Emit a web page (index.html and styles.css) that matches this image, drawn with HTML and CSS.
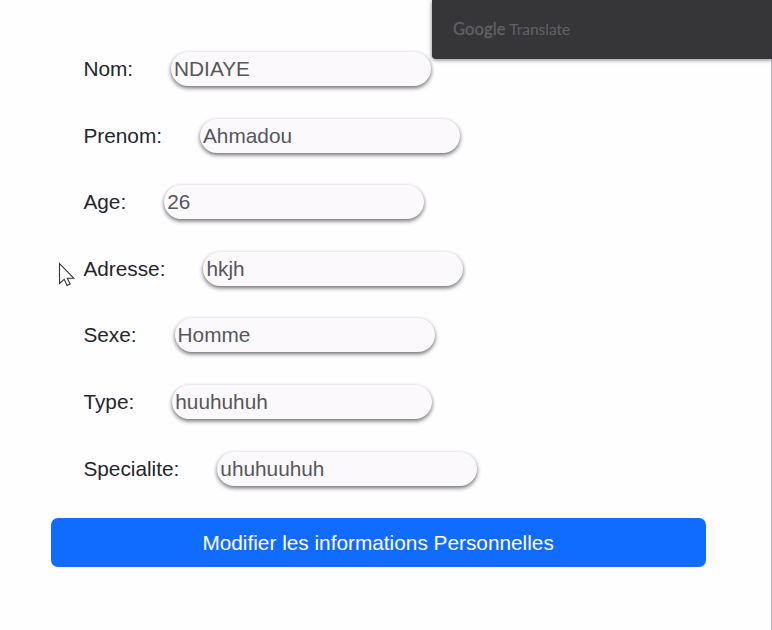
FILE: index.html
```html
<!DOCTYPE html>
<html lang="fr">
<head>
<meta charset="utf-8">
<title>Informations Personnelles</title>
<link rel="stylesheet" href="styles.css">
</head>
<body>
<main class="page">
  <form class="profile">
    <div class="fields">
      <div class="row"><label for="nom">Nom:</label><input id="nom" value="NDIAYE"></div>
      <div class="row"><label for="prenom">Prenom:</label><input id="prenom" value="Ahmadou"></div>
      <div class="row"><label for="age">Age:</label><input id="age" value="26"></div>
      <div class="row"><label for="adresse">Adresse:</label><input id="adresse" value="hkjh"></div>
      <div class="row"><label for="sexe">Sexe:</label><input id="sexe" value="Homme"></div>
      <div class="row"><label for="type">Type:</label><input id="type" value="huuhuhuh"></div>
      <div class="row"><label for="specialite">Specialite:</label><input id="specialite" value="uhuhuuhuh"></div>
    </div>
    <button class="submit" type="button">Modifier les informations Personnelles</button>
  </form>
</main>
<aside class="translate"><span class="brand">Google</span> <span class="product">Translate</span></aside>
<svg class="cursor" width="18" height="26" viewBox="0 0 18 26"><path d="M1.5 1.5V21.5L6.2 17.3L9.1 23.4L12.1 22L9.3 16.2H15.8Z" fill="#fff" stroke="#333238" stroke-width="1.1"/></svg>
</body>
</html>
```
FILE: styles.css
```css
* {
  box-sizing: border-box;
}

body {
  margin: 0;
  position: relative;
  background: #fefdff;
  font-family: "Liberation Sans", Arial, sans-serif;
  font-size: 20.8px;
  color: #25262b;
}

.page {
  height: 630px;
  border-right: 1px solid #b9b8bc;
}

.profile {
  width: 655px;
  margin-left: 50.6px;
  padding-top: 35.7px;
}

.fields {
  padding-left: 32.8px;
}

.row {
  display: flex;
  align-items: center;
  gap: 38px;
  height: 66.6px;
}

.row input {
  width: 260px;
  height: 34px;
  padding: 0 3px;
  border: 0;
  border-radius: 17px;
  outline: 0;
  background: #fbf9fc;
  box-shadow: 0 2px 4px rgba(0, 0, 0, 0.58);
  font: inherit;
  color: #58565b;
}

.submit {
  display: block;
  width: 100%;
  height: 49px;
  margin-top: 16.3px;
  padding: 0;
  border: 0;
  border-radius: 7px;
  background: #106cff;
  font: inherit;
  color: #fff;
}

.translate {
  position: absolute;
  z-index: 1;
  top: 0;
  left: 432px;
  width: 340px;
  height: 59px;
  padding: 19px 0 0 21px;
  border-radius: 0 0 0 4px;
  background: #363538;
  box-shadow: 0 1px 4px rgba(0, 0, 0, 0.5);
  color: #626165;
  font-family: Lato, sans-serif;
  font-size: 15.5px;
  line-height: 20px;
  white-space: nowrap;
}

.brand {
  font-size: 16.5px;
  letter-spacing: 0.15px;
  -webkit-text-stroke: 0.3px #626165;
}

.cursor {
  position: absolute;
  left: 58px;
  top: 262px;
}
```
